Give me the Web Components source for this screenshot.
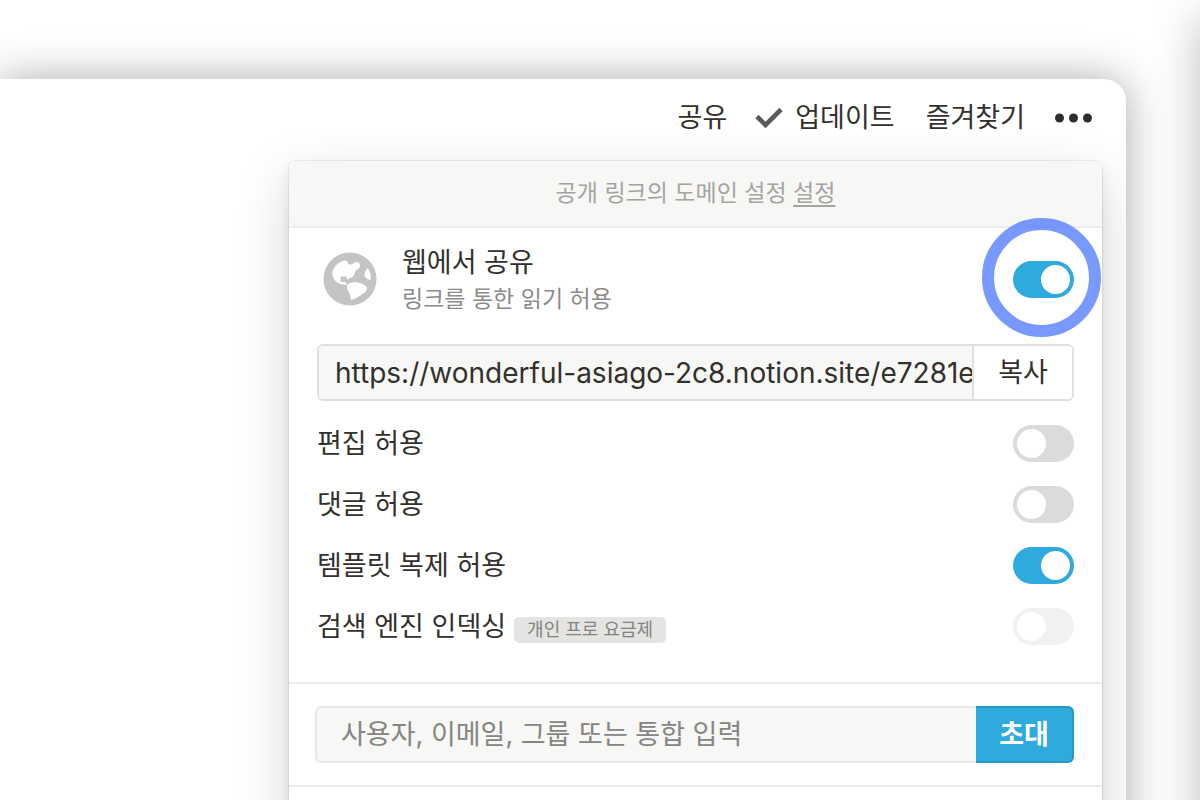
<!DOCTYPE html>
<html lang="ko">
<head>
<meta charset="UTF-8">
<meta name="viewport" content="width=device-width, initial-scale=1">
<title>웹에서 공유</title>
<style>
  body {
    margin: 0;
    background: #ffffff;
    color: #32312d;
    font-family: Inter, "Noto Sans CJK KR", sans-serif;
    font-size: 27px;
    line-height: 36px;
  }
</style>
</head>
<body>
<app-stage>
  <app-window>
    <top-bar slot="bar"></top-bar>
    <share-panel>
      <domain-notice slot="head"></domain-notice>
      <share-header></share-header>
      <link-field url="https://wonderful-asiago-2c8.notion.site/e7281e"></link-field>
      <toggle-row>편집 허용</toggle-row>
      <toggle-row>댓글 허용</toggle-row>
      <toggle-row checked>템플릿 복제 허용</toggle-row>
      <toggle-row disabled badge="개인 프로 요금제">검색 엔진 인덱싱</toggle-row>
      <invite-form slot="foot"></invite-form>
    </share-panel>
  </app-window>
</app-stage>

<script>
class AppStage extends HTMLElement {
  constructor() {
    super()
    this.attachShadow({ mode: "open" })
    this.shadowRoot.innerHTML = `
    <style>
      :host {
        display: grid;
        grid-template-columns: minmax(0, 1fr) 74px;
        box-sizing: border-box;
        height: 100vh;
        padding-top: 79px;
        overflow: hidden;
      }

      /* edge of the next window, its shadow falls to the left */
      .next {
        width: 200px;
        margin: -60px 0 0 74px;
        box-shadow: 0 0 44px rgba(0, 0, 0, 0.26);
      }
    </style>
    <slot></slot>
    <div class="next"></div>
    `
  }
}
customElements.define("app-stage", AppStage)

class AppWindow extends HTMLElement {
  constructor() {
    super()
    this.attachShadow({ mode: "open" })
    this.shadowRoot.innerHTML = `
    <style>
      :host {
        display: block;
        min-width: 0;
        height: 120vh;
        background: #ffffff;
        border-radius: 0 22px 0 0;
        box-shadow: 0 0 44px rgba(0, 0, 0, 0.34);
      }

      main {
        display: grid;
        grid-template-columns: minmax(0, 813px);
        justify-content: end;
        box-sizing: border-box;
        height: 100%;
        padding: 82px 24px 0 0;
        margin-top: -82px;
        overflow: hidden;
        border-radius: 0 22px 0 0;
      }
    </style>
    <slot name="bar"></slot>
    <main><slot></slot></main>
    `
  }
}
customElements.define("app-window", AppWindow)

class TopBar extends HTMLElement {
  constructor() {
    super()
    this.attachShadow({ mode: "open" })
    this.shadowRoot.innerHTML = `
    <style>
      :host {
        display: block;
        position: relative;
        z-index: 1;
      }

      nav {
        display: flex;
        justify-content: flex-end;
        align-items: center;
        gap: 30px;
        height: 82px;
        padding: 0 34px 5px 0;
        box-sizing: border-box;
      }

      button {
        display: flex;
        align-items: center;
        padding: 0;
        border: 0;
        background: none;
        color: inherit;
        font: inherit;
        cursor: pointer;
      }

      .update {
        gap: 12px;
        margin: 0 1px 0 -2px;
      }

      svg {
        display: block;
      }
    </style>
    <nav>
      <button type="button">공유</button>
      <button type="button" class="update">
        <svg width="28" height="24" viewBox="0 0 28 24" aria-hidden="true">
          <path d="M2 10.500L10.500 19L26 3.500" fill="none" stroke="#5c5b57" stroke-width="4.600"/>
        </svg>
        업데이트
      </button>
      <button type="button">즐겨찾기</button>
      <button type="button" aria-label="더 보기">
        <svg width="37" height="10" viewBox="0 0 37 10" fill="#2f2e2a">
          <circle cx="4.500" cy="5" r="4.500"/>
          <circle cx="18.500" cy="5" r="4.500"/>
          <circle cx="32.500" cy="5" r="4.500"/>
        </svg>
      </button>
    </nav>
    `
  }
}
customElements.define("top-bar", TopBar)

class SharePanel extends HTMLElement {
  constructor() {
    super()
    this.attachShadow({ mode: "open" })
    this.shadowRoot.innerHTML = `
    <style>
      :host {
        display: block;
        min-width: 0;
        background: #ffffff;
        border-radius: 6px;
        box-shadow: 0 0 0 1px rgba(15, 15, 15, 0.06), 0 6px 12px rgba(15, 15, 15, 0.08), 0 18px 52px rgba(15, 15, 15, 0.17);
      }

      .body {
        padding: 13px 28px 25px;
      }
    </style>
    <slot name="head"></slot>
    <div class="body"><slot></slot></div>
    <slot name="foot"></slot>
    `
  }
}
customElements.define("share-panel", SharePanel)

class DomainNotice extends HTMLElement {
  constructor() {
    super()
    this.attachShadow({ mode: "open" })
    this.shadowRoot.innerHTML = `
    <style>
      :host {
        display: block;
        padding: 14px 0 15px;
        background: #f7f7f5;
        border-bottom: 2px solid #eeeeec;
        border-radius: 6px 6px 0 0;
        color: #a5a4a1;
        font-size: 23px;
        text-align: center;
      }

      a {
        color: inherit;
        text-underline-offset: 4px;
      }
    </style>
    공개 링크의 도메인 설정 <a href="#domain">설정</a>
    `
  }
}
customElements.define("domain-notice", DomainNotice)

class ToggleSwitch extends HTMLElement {
  constructor() {
    super()
    this.attachShadow({ mode: "open", delegatesFocus: true })
    this.shadowRoot.innerHTML = `
    <style>
      :host {
        display: block;
        flex: none;
      }

      input {
        appearance: none;
        display: flex;
        box-sizing: border-box;
        width: 61px;
        height: 37px;
        margin: 0;
        padding: 4px;
        border-radius: 19px;
        background: #dbdbd9;
        cursor: pointer;
      }

      input::before {
        content: "";
        width: 29px;
        height: 29px;
        border-radius: 50%;
        background: #ffffff;
      }

      input:checked {
        justify-content: flex-end;
        background: #2eaadc;
      }

      input:disabled {
        background: #f1f1f0;
        cursor: default;
      }
    </style>
    <input type="checkbox" role="switch">
    `
  }

  connectedCallback() {
    const input = this.shadowRoot.querySelector("input")
    input.checked = this.hasAttribute("checked")
    input.disabled = this.hasAttribute("disabled")
    input.setAttribute("aria-label", this.getAttribute("label") || "")
  }
}
customElements.define("toggle-switch", ToggleSwitch)

class ShareHeader extends HTMLElement {
  constructor() {
    super()
    this.attachShadow({ mode: "open" })
    this.shadowRoot.innerHTML = `
    <style>
      :host {
        display: flex;
        align-items: center;
        height: 76px;
        padding-left: 6px;
      }

      .globe {
        flex: none;
        width: 54px;
        height: 54px;
        margin-right: 25px;
      }

      .text {
        flex: 1;
        padding-top: 4px;
      }

      p {
        margin: 0;
      }

      .sub {
        color: #8c8b88;
        font-size: 23px;
      }

      .spot {
        position: relative;
      }

      .spot::after {
        content: "";
        position: absolute;
        z-index: 1;
        left: -31px;
        top: -43px;
        box-sizing: border-box;
        width: 119px;
        height: 119px;
        border: 12px solid rgba(82, 124, 255, 0.78);
        border-radius: 50%;
        pointer-events: none;
      }
    </style>
    <svg class="globe" viewBox="0 0 54 54" aria-hidden="true">
      <circle cx="27" cy="27" r="26.500" fill="#c4c4c2"/>
      <path fill="#fff" d="M9.500 20C11 14 16 9.500 22 8.500L24 9C24 12 27 13.500 30 12C31 9.500 34 9.500 36 11C38 13 37 16 34.500 17.500C31 19 32 23 29.500 25C27.500 26.500 25 26 24 28L23.500 24.500H17.500V30H22.500L24 33C16 33 11.500 29.500 10 25C9.300 23 9.200 21.500 9.500 20Z"/>
      <path fill="#fff" d="M24 33.500C26 30.500 31 29.500 35 30.500C38 31.500 43 33 44 35.500C44.500 40 39 42 35 45C32 47 30 47.500 28 48L27 43C26 39 23.500 38 24 33.500Z"/>
      <path fill="#fff" d="M44.500 16C47 19 48.500 23 47.500 28C44 27.500 41 25 41.500 22C42 19.500 43 18 44.500 16Z"/>
    </svg>
    <div class="text">
      <p>웹에서 공유</p>
      <p class="sub">링크를 통한 읽기 허용</p>
    </div>
    <div class="spot"><toggle-switch checked label="웹에서 공유"></toggle-switch></div>
    `
  }
}
customElements.define("share-header", ShareHeader)

class LinkField extends HTMLElement {
  constructor() {
    super()
    this.attachShadow({ mode: "open" })
    this.shadowRoot.innerHTML = `
    <style>
      :host {
        display: flex;
        box-sizing: border-box;
        height: 57px;
        margin: 27px 0 12px;
        overflow: hidden;
        border: 2px solid #e0e0de;
        border-radius: 6px;
      }

      input {
        flex: 1;
        min-width: 0;
        padding: 0 0 0 16px;
        border: 0;
        background: #f7f7f5;
        color: inherit;
        font: inherit;
        font-size: 28px;
        outline: none;
      }

      button {
        width: 100px;
        padding: 0;
        border: 0;
        border-left: 2px solid #e0e0de;
        background: #ffffff;
        color: inherit;
        font: inherit;
        cursor: pointer;
      }
    </style>
    <input type="text" readonly aria-label="공개 링크">
    <button type="button">복사</button>
    `
  }

  connectedCallback() {
    const input = this.shadowRoot.querySelector("input")
    input.value = this.getAttribute("url")
    this.shadowRoot.querySelector("button").addEventListener("click", () => {
      input.select()
      document.execCommand("copy")
    })
  }
}
customElements.define("link-field", LinkField)

class ToggleRow extends HTMLElement {
  constructor() {
    super()
    this.attachShadow({ mode: "open" })
  }

  connectedCallback() {
    const badge = this.getAttribute("badge")
    const state = (this.hasAttribute("checked") ? "checked " : "") + (this.hasAttribute("disabled") ? "disabled" : "")
    this.shadowRoot.innerHTML = `
    <style>
      :host {
        display: flex;
        align-items: center;
        justify-content: space-between;
        height: 61px;
      }

      .label {
        display: flex;
        align-items: center;
        gap: 8px;
        padding-top: 1px;
      }

      .badge {
        padding: 0 13px;
        margin-top: 5px;
        border-radius: 5px;
        background: #e4e4e3;
        color: #848380;
        font-size: 18px;
        line-height: 26px;
      }
    </style>
    <div class="label"><slot></slot>${badge ? `<span class="badge">${badge}</span>` : ""}</div>
    <toggle-switch ${state} label="${this.textContent.trim()}"></toggle-switch>
    `
  }
}
customElements.define("toggle-row", ToggleRow)

class InviteForm extends HTMLElement {
  constructor() {
    super()
    this.attachShadow({ mode: "open" })
    this.shadowRoot.innerHTML = `
    <style>
      :host {
        display: block;
        padding: 22px 28px 22px 26px;
        border-top: 2px solid #ececea;
        border-bottom: 2px solid #ececea;
      }

      form {
        display: flex;
        height: 57px;
        margin: 0;
      }

      input {
        flex: 1;
        min-width: 0;
        padding: 0 0 0 24px;
        border: 2px solid #e8e8e6;
        border-right: 0;
        border-radius: 6px 0 0 6px;
        background: #f7f7f5;
        color: inherit;
        font: inherit;
        outline: none;
      }

      input::placeholder {
        color: #868582;
        opacity: 1;
      }

      button {
        width: 98px;
        padding: 0;
        border: 2px solid #2799c8;
        border-left: 0;
        border-radius: 0 6px 6px 0;
        background: #2eaadc;
        color: #ffffff;
        font: inherit;
        font-weight: 700;
        cursor: pointer;
      }
    </style>
    <form>
      <input type="text" aria-label="초대할 사용자" placeholder="사용자, 이메일, 그룹 또는 통합 입력">
      <button type="button">초대</button>
    </form>
    `
  }
}
customElements.define("invite-form", InviteForm)
</script>
</body>
</html>
